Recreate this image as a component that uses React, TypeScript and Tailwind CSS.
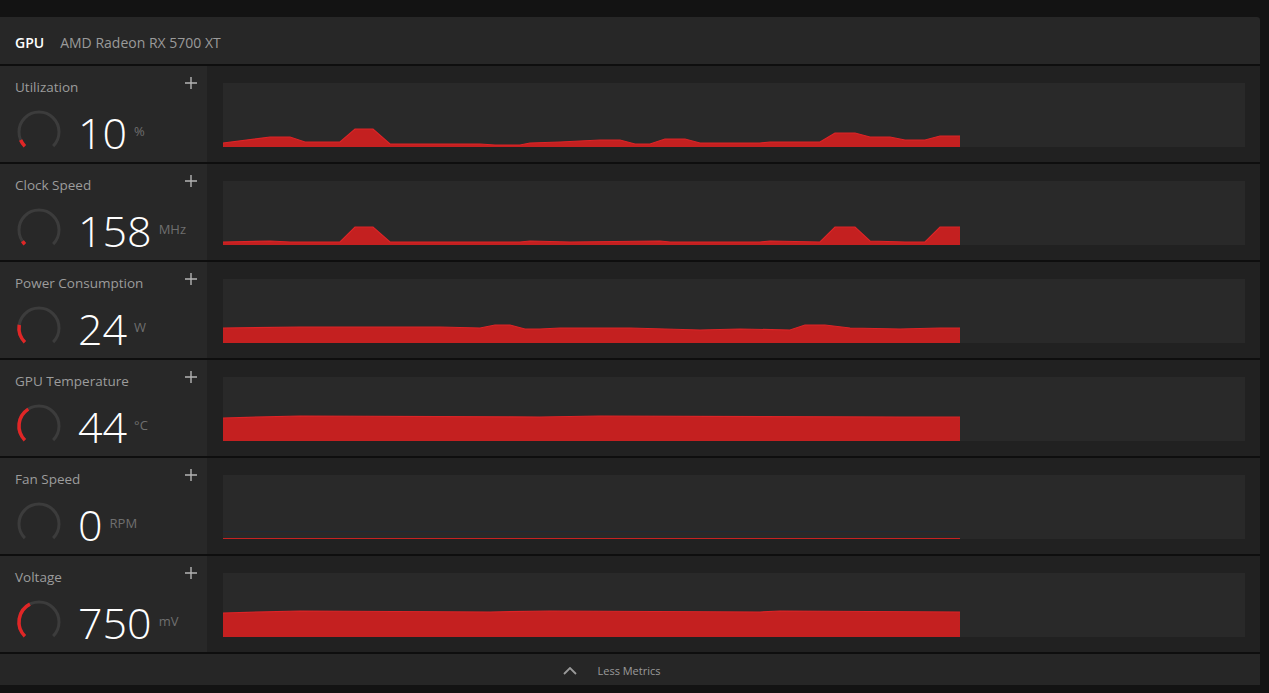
import React from 'react';

type Metric = {
    label: string;
    value: string;
    unit: string;
    pct: number;
    data: [number, number][];
    line?: boolean;
};

const metrics: Metric[] = [
    {
        label: 'Utilization',
        value: '10',
        unit: '%',
        pct: 0.08,
        data: [[0, 4], [47, 10], [67, 10], [82, 5], [117, 5], [132, 18], [150, 18], [167, 3], [257, 3], [272, 2], [297, 2], [307, 4], [337, 5], [377, 7], [397, 7], [412, 3], [427, 3], [442, 8], [462, 8], [477, 4], [537, 4], [547, 5], [597, 5], [612, 14], [632, 14], [647, 10], [667, 10], [682, 7], [702, 7], [717, 11], [737, 11]],
    },
    {
        label: 'Clock Speed',
        value: '158',
        unit: 'MHz',
        pct: 0.04,
        data: [[0, 3], [47, 4], [67, 3], [117, 3], [132, 18], [150, 18], [167, 3], [297, 3], [307, 4], [347, 3], [437, 4], [447, 3], [537, 3], [547, 4], [597, 3], [612, 18], [632, 18], [647, 4], [682, 3], [702, 3], [717, 18], [737, 18]],
    },
    {
        label: 'Power Consumption',
        value: '24',
        unit: 'W',
        pct: 0.2,
        data: [[0, 15], [77, 16], [217, 16], [257, 15], [272, 18], [287, 18], [302, 14], [317, 14], [337, 15], [407, 15], [477, 13], [517, 14], [567, 13], [582, 18], [602, 18], [627, 15], [677, 14], [717, 15], [737, 15]],
    },
    {
        label: 'GPU Temperature',
        value: '44',
        unit: '°C',
        pct: 0.38,
        data: [[0, 23], [77, 25], [317, 24], [377, 25], [677, 24], [737, 24]],
    },
    {
        label: 'Fan Speed',
        value: '0',
        unit: 'RPM',
        pct: 0,
        data: [[0, 1], [737, 1]],
        line: true,
    },
    {
        label: 'Voltage',
        value: '750',
        unit: 'mV',
        pct: 0.4,
        data: [[0, 24], [77, 26], [267, 25], [327, 26], [537, 25], [557, 26], [737, 25]],
    },
];

const pt = (deg: number, r: number) => {
    const a = (deg * Math.PI) / 180;
    return `${(24 + r * Math.cos(a)).toFixed(2)} ${(24 + r * Math.sin(a)).toFixed(2)}`;
};

const arc = (from: number, to: number, r: number) =>
    `M ${pt(from, r)} A ${r} ${r} 0 ${to - from > 180 ? 1 : 0} 1 ${pt(to, r)}`;

const Gauge: React.FC<{ pct: number }> = ({ pct }) => (
    <svg width="48" height="48" viewBox="0 0 48 48" className="shrink-0">
        <path d={arc(135, 405, 20)} fill="none" stroke="#3c3c3c" strokeWidth="3" />
        {pct > 0 && (
            <path d={arc(135, 135 + 270 * pct, 20)} fill="none" stroke="#e02626" strokeWidth="3.5" />
        )}
    </svg>
);

const Chart: React.FC<{ data: [number, number][]; line?: boolean }> = ({ data, line }) => {
    const top = data.map(([x, h]) => `${x},${64 - h}`).join(' ');
    return (
        <div className="h-[64px] bg-[#292929]">
            <svg width="100%" height="64" viewBox="0 0 1022 64" preserveAspectRatio="none" className="block">
                {line ? (
                    <>
                        <line x1="0" y1="56.5" x2="737" y2="56.5" stroke="#1f2a36" strokeWidth="1" />
                        <line x1="0" y1="63.5" x2="737" y2="63.5" stroke="#c42222" strokeWidth="1" />
                    </>
                ) : (
                    <>
                        <polygon points={`0,64 ${top} 737,64`} fill="#c42020" />
                        <polyline points={top} fill="none" stroke="#dc2427" strokeWidth="1.2" />
                    </>
                )}
            </svg>
        </div>
    );
};

const MetricRow: React.FC<{ m: Metric }> = ({ m }) => (
    <div className="flex h-[96px]">
        <div className="w-[207px] shrink-0 bg-[#282828] pl-[15px] pr-[10px] pt-[12px]">
            <div className="flex items-start justify-between">
                <span className="text-[13.5px] leading-[18px] text-[#9c9c9c]">{m.label}</span>
                <svg width="12" height="12" viewBox="0 0 12 12" className="mt-[-1px]">
                    <path d="M6 0v12M0 6h12" stroke="#b4b4b4" strokeWidth="1.4" />
                </svg>
            </div>
            <div className="mt-[11px] flex items-center">
                <Gauge pct={m.pct} />
                <span className="ml-[15px] mt-[2px] text-[43px] font-light leading-[48px] text-white">{m.value}</span>
                <span className="ml-[7px] text-[13px] text-[#6f6f6f]">{m.unit}</span>
            </div>
        </div>
        <div className="flex-1 bg-[#212121] pb-[15px] pl-[16px] pr-[15px] pt-[17px]">
            <Chart data={m.data} line={m.line} />
        </div>
    </div>
);

export default function App() {
    return (
        <div
            className="min-h-[693px] bg-[#131313] pt-[17px]"
            style={{ fontFamily: '"Open Sans", "Noto Sans", sans-serif' }}
        >
            <div className="flex w-[1260px] flex-col gap-[2px] overflow-hidden rounded-tr-[3px] bg-[#0e0e0e]">
                <div className="flex h-[47px] items-center gap-[16px] bg-[#272727] px-[15px] pt-[3px] text-[14px]">
                    <span className="font-semibold text-white">GPU</span>
                    <span className="text-[#9a9a9a]">AMD Radeon RX 5700 XT</span>
                </div>
                {metrics.map((m) => (
                    <MetricRow key={m.label} m={m} />
                ))}
                <div className="flex h-[31px] items-center justify-center gap-[20px] bg-[#262626] pr-[36px] pt-[3px]">
                    <svg width="14" height="8" viewBox="0 0 14 8">
                        <path d="M1 7l6-6 6 6" fill="none" stroke="#9a9a9a" strokeWidth="1.8" />
                    </svg>
                    <span className="text-[11px] text-[#9a9a9a]">Less Metrics</span>
                </div>
            </div>
        </div>
    );
}
